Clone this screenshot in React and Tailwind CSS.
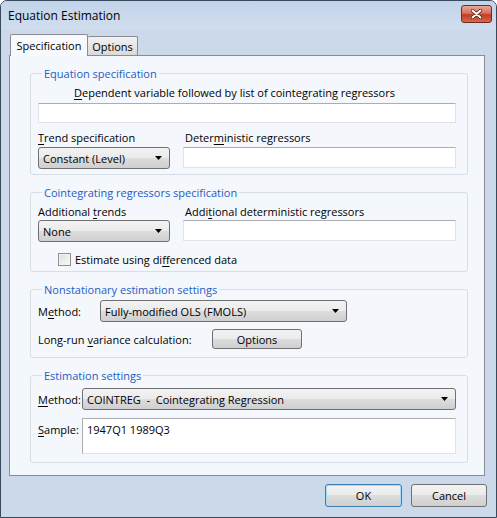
import { useState } from "react";

const U = ({ children }) => <span className="underline underline-offset-2">{children}</span>;

const Combo = ({ value, className = "" }) => (
  <div
    className={`flex h-[22px] items-center justify-between rounded-[3px] border border-[#707070] bg-[linear-gradient(#f2f2f2_0%,#ebebeb_50%,#dddddd_50%,#cfcfcf_100%)] pl-[4px] pr-[7px] ${className}`}
  >
    <span className="truncate whitespace-pre">{value}</span>
    <svg width="7" height="4" viewBox="0 0 7 4" className="shrink-0">
      <path d="M0 0h7L3.5 4z" fill="#000" />
    </svg>
  </div>
);

const TextBox = ({ className = "", children }) => (
  <div
    className={`border border-[#e2e3ea] border-t-[#abadb3] bg-white ${className}`}
  >
    {children}
  </div>
);

const Button = ({ children, isDefault, className = "" }) => (
  <button
    className={`flex items-center justify-center rounded-[3px] border ${
      isDefault ? "border-[#3c7fb1] shadow-[inset_0_0_0_1px_#9fe0f7]" : "border-[#707070]"
    } bg-[linear-gradient(#f2f2f2_0%,#ebebeb_50%,#dddddd_50%,#cfcfcf_100%)] ${className}`}
  >
    {children}
  </button>
);

const Group = ({ title, className = "", children }) => (
  <fieldset
    className={`rounded-[3px] border border-[#d5dfe5] pl-[7px] pr-[11px] ${className}`}
  >
    <legend className="ml-[4px] px-[2px] leading-[15px] text-[#1e5bc6]">{title}</legend>
    {children}
  </fieldset>
);

export default function App() {
  const [differenced, setDifferenced] = useState(false);

  return (
    <div
      className="flex h-[518px] w-[497px] flex-col rounded-t-[7px] border border-[#38495c] bg-[#cbd9eb] text-[11px] leading-[15px] text-black"
      style={{ fontFamily: '"Open Sans", "Noto Sans", sans-serif' }}
    >
      {/* title bar */}
      <div className="flex h-[28px] shrink-0 items-start justify-between rounded-t-[6px] bg-[linear-gradient(#c2d4ea,#d0ddee)] pl-[7px] pr-[4px]">
        <span className="mt-[7px] text-[12px]">Equation Estimation</span>
        <div className="mt-[4px] flex h-[18px] w-[31px] items-center justify-center rounded-[3px] border border-[#6d2b23] bg-[linear-gradient(#e8a898_0%,#d8705a_45%,#c23b25_55%,#d56b4b_100%)]">
          <svg width="11" height="10" viewBox="0 0 11 10">
            <path d="M1.5 1.5l8 7M9.5 1.5l-8 7" stroke="#3a1510" strokeWidth="3.4" strokeLinecap="round" />
            <path d="M1.5 1.5l8 7M9.5 1.5l-8 7" stroke="#fff" strokeWidth="2" strokeLinecap="round" />
          </svg>
        </div>
      </div>

      {/* client area */}
      <div className="flex flex-1 flex-col pl-[8px] pr-[11px] pt-[5px]">
        {/* tabs */}
        <div className="relative z-10 flex h-[21px] items-end pl-[1px]">
          <div className="-mb-[1px] flex h-[22px] w-[78px] items-center justify-center rounded-t-[2px] border border-b-0 border-[#898c95] bg-[#f7f9fc]">
            Specification
          </div>
          <div className="flex h-[19px] w-[50px] items-center justify-center rounded-t-[2px] border border-b-0 border-l-0 border-[#898c95] bg-[linear-gradient(#f2f2f2,#d9d9d9)]">
            Options
          </div>
        </div>

        {/* tab panel */}
        <div className="flex h-[421px] flex-col gap-[10px] border border-[#898c95] bg-[#f4f7fb] pl-[20px] pr-[16px] pt-[10px]">
          <Group title="Equation specification" className="pb-[5px]">
            <div className="mt-[4px] pr-[25px] text-center">
              <U>D</U>ependent variable followed by list of cointegrating regressors
            </div>
            <TextBox className="mt-[3px] h-[20px]" />
            <div className="mt-[7px] flex gap-[13px]">
              <div className="flex w-[132px] flex-col">
                <span>
                  <U>T</U>rend specification
                </span>
                <Combo value="Constant (Level)" className="mt-[2px]" />
              </div>
              <div className="flex flex-1 flex-col">
                <span className="pl-[2px]">
                  Deter<U>m</U>inistic regressors
                </span>
                <TextBox className="mt-[2px] h-[21px]" />
              </div>
            </div>
          </Group>

          <Group title="Cointegrating regressors specification" className="pb-[4px]">
            <div className="mt-[4px] flex gap-[13px]">
              <div className="flex w-[132px] flex-col">
                <span>
                  Additional <U>t</U>rends
                </span>
                <Combo value="None" className="mt-[1px]" />
              </div>
              <div className="flex flex-1 flex-col">
                <span className="pl-[2px]">
                  Addi<U>t</U>ional deterministic regressors
                </span>
                <TextBox className="mt-[1px] h-[21px]" />
              </div>
            </div>
            <label className="mt-[10px] flex items-center gap-[4px] pl-[20px]">
              <span
                onClick={() => setDifferenced(!differenced)}
                className="h-[13px] w-[13px] border border-[#8e8f8f] bg-[linear-gradient(135deg,#dcdcdc,#fbfbfb)] shadow-[inset_0_0_0_1px_#f4f4f4]"
              />
              <span>
                Estimate using di<U>f</U>ferenced data
              </span>
            </label>
          </Group>

          <Group title="Nonstationary estimation settings" className="pb-[8px]">
            <div className="mt-[3px] flex items-center">
              <span className="w-[62px]">
                M<U>e</U>thod:
              </span>
              <Combo value="Fully-modified OLS (FMOLS)" className="w-[247px]" />
            </div>
            <div className="mt-[7px] flex items-center">
              <span className="w-[174px]">
                Long-run <U>v</U>ariance calculation:
              </span>
              <Button className="h-[20px] w-[90px]">Options</Button>
            </div>
          </Group>

          <Group title="Estimation settings" className="pb-[8px]">
            <div className="mt-[5px] flex items-center">
              <span className="w-[44px]">
                <U>M</U>ethod:
              </span>
              <Combo value="COINTREG  -  Cointegrating Regression" className="flex-1" />
            </div>
            <div className="mt-[8px] flex items-start">
              <span className="mt-[4px] w-[44px]">
                <U>S</U>ample:
              </span>
              <TextBox className="h-[36px] flex-1 border-l-[#abadb3] px-[4px] pt-[3px]">1947Q1 1989Q3</TextBox>
            </div>
          </Group>
        </div>

        {/* buttons */}
        <div className="-mr-[2px] mt-[8px] flex justify-end gap-[9px]">
          <Button isDefault className="h-[23px] w-[77px]">
            OK
          </Button>
          <Button className="h-[23px] w-[76px]">Cancel</Button>
        </div>
      </div>
    </div>
  );
}
